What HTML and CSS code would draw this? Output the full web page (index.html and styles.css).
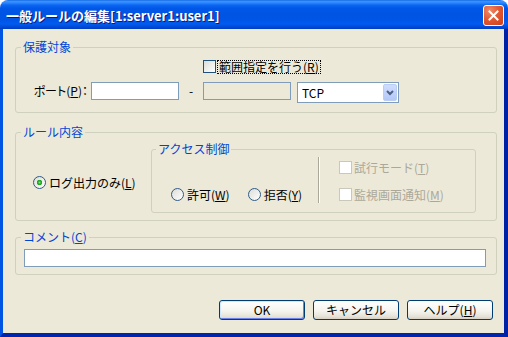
FILE: index.html
```html
<!DOCTYPE html>
<html lang="ja">
<head>
    <meta charset="UTF-8">
    <title>一般ルールの編集</title>
    <link rel="stylesheet" href="styles.css">
</head>
<body>
    <div class="window">
        <div class="titlebar">
            <span class="title">一般ルールの編集[1:server1:user1]</span>
            <span class="close-btn">
                <svg width="11" height="11" viewBox="0 0 11 11"><path d="M1.5 1.5 L9.5 9.5 M9.5 1.5 L1.5 9.5" stroke="#fff" stroke-width="2" stroke-linecap="square"/></svg>
            </span>
        </div>

        <div class="client">
            <fieldset class="group group-target">
                <legend>保護対象</legend>
                <div class="target-grid">
                    <label class="check range"><span class="checkbox"></span><span class="focus">範囲指定を行う(<u>R</u>)</span></label>
                    <span class="port-label">ポート(<u>P</u>)：</span>
                    <input class="textbox" type="text">
                    <span class="dash">-</span>
                    <input class="textbox" type="text" disabled>
                    <span class="combo">
                        <span class="combo-text">TCP</span>
                        <span class="combo-btn">
                            <svg width="8" height="6" viewBox="0 0 8 6"><path d="M1 1 L4 4 L7 1" fill="none" stroke="#4d6185" stroke-width="2"/></svg>
                        </span>
                    </span>
                </div>
            </fieldset>

            <fieldset class="group group-rule">
                <legend>ルール内容</legend>
                <div class="rule-row">
                    <div class="log-col">
                        <label class="radio-item"><span class="radio checked"></span>ログ出力のみ(<u>L</u>)</label>
                    </div>
                    <fieldset class="group group-access">
                        <legend>アクセス制御</legend>
                        <div class="access-row">
                            <div class="radios">
                                <label class="radio-item"><span class="radio"></span>許可(<u>W</u>)</label>
                                <label class="radio-item"><span class="radio"></span>拒否(<u>Y</u>)</label>
                            </div>
                            <span class="separator"></span>
                            <div class="options">
                                <label class="check disabled"><span class="checkbox"></span>試行モード(<u>T</u>)</label>
                                <label class="check disabled"><span class="checkbox"></span>監視画面通知(<u>M</u>)</label>
                            </div>
                        </div>
                    </fieldset>
                </div>
            </fieldset>

            <fieldset class="group group-comment">
                <legend>コメント(<u>C</u>)</legend>
                <input class="textbox comment-box" type="text">
            </fieldset>

            <div class="buttons">
                <button class="btn default">OK</button>
                <button class="btn">キャンセル</button>
                <button class="btn">ヘルプ(<u>H</u>)</button>
            </div>
        </div>
    </div>
</body>
</html>
```

FILE: styles.css
```css
* { box-sizing: border-box; }
body { margin: 0; background: #fff; font-family: "Noto Sans CJK JP", "Liberation Sans", sans-serif; font-size: 12px; color: #000; }
u { text-decoration: underline; text-underline-offset: 1px; }

.window { width: 508px; height: 337px; display: flex; flex-direction: column; }

/* title bar */
.titlebar { flex: none; height: 29px; display: flex; align-items: flex-start; border-radius: 8px 8px 0 0;
    background: linear-gradient(to bottom, #0a5bd8 0, #3d95ff 1px, #2a85ff 3px, #0c67f0 5px, #0058e8 8px, #0054e3 14px, #0055e6 20px, #005cef 24px, #0049d6 27px, #003dc0 29px); }
.title { margin: 7px 0 0 6px; font-size: 13px; font-weight: bold; line-height: 17px; color: #fff; text-shadow: 1px 1px 0 #0a1a8a; }
.close-btn { margin: 5px 4px 0 auto; width: 21px; height: 21px; border: 1px solid #fff; border-radius: 3px; display: flex; align-items: center; justify-content: center;
    background: radial-gradient(circle at 30% 25%, #f08a6a 0, #e25a33 45%, #c9401c 100%); }

/* client area */
.client { flex: 1; background: #ece9d8; border-left: 3px solid #0054e3; border-right: 4px solid #0021a3; border-bottom: 4px solid #0024ab; padding-top: 11px; }

.group { margin: 0; padding: 0; border: 1px solid #d0d0bf; border-radius: 3px; min-width: 0; }
.group legend { margin-left: 5px; padding: 0 2px; line-height: 14px; color: #0046d5; }
.group-target, .group-rule, .group-comment { width: 482px; margin-left: 12px; }

/* 保護対象 */
.group-target { padding-bottom: 10px; }
.target-grid { display: grid; grid-template-columns: 59px 88px 24px 88px 108px; grid-template-rows: 13px 20px; row-gap: 9px; margin: 6px 0 0 16px; align-items: start; }
.range { grid-column: 4 / 6; }
.port-label { justify-self: end; padding-right: 3px; white-space: nowrap; line-height: 18px; font-feature-settings: "palt"; }
.dash { text-align: center; line-height: 18px; }
.textbox { width: 88px; height: 18px; border: 1px solid #7f9db9; background: #fff; padding: 0 3px; font: inherit; outline: none; }
.textbox:disabled { background: #ece9d8; }
.combo { margin-left: 6px; width: 102px; height: 21px; border: 1px solid #7f9db9; background: #fff; display: flex; align-items: center; padding: 1px; }
.combo-text { padding-left: 3px; line-height: 17px; }
.combo-btn { margin-left: auto; width: 14px; height: 17px; border: 1px solid #b9cdf6; border-radius: 2px; background: linear-gradient(#cfdcfd, #b4c8f7); display: flex; align-items: center; justify-content: center; }

/* checkboxes and radios */
.check, .radio-item { display: flex; align-items: center; line-height: 13px; white-space: nowrap; }
.checkbox { flex: none; width: 13px; height: 13px; border: 1px solid #1c5180; background: linear-gradient(135deg, #dcdcd7, #fff); margin-right: 2px; }
.focus { padding: 0 1px; outline: 1px dotted #000; line-height: 12px; }
.check.disabled { color: #aca899; }
.check.disabled .checkbox { border-color: #cac8bb; background: #fff; }
.radio { flex: none; width: 13px; height: 13px; border: 1px solid #2f5b89; border-radius: 50%; margin-right: 3px; background: linear-gradient(135deg, #dcdcd7, #fff); }
.radio.checked { background: radial-gradient(circle, #7ee07e 0, #2fae2f 1.5px, #21a121 2.5px, transparent 3px), linear-gradient(135deg, #dcdcd7, #fff); }

/* ルール内容 */
.group-rule { margin-top: 12px; padding-bottom: 7px; }
.rule-row { display: flex; margin-top: 3px; }
.log-col { width: 135px; padding: 34px 0 0 17px; }
.group-access { width: 325px; }
.group-access legend { margin-left: 4px; }
.access-row { display: flex; height: 56px; }
.radios { width: 166px; display: flex; gap: 18px; padding: 20px 0 0 19px; }
.separator { width: 2px; height: 46px; margin-top: 1px; border-left: 1px solid #aca899; border-right: 1px solid #fff; }
.options { margin-left: 19px; padding-top: 5px; display: flex; flex-direction: column; gap: 14px; }

/* コメント */
.group-comment { margin-top: 9px; padding-bottom: 7px; }
.comment-box { display: block; width: 462px; margin: 5px 0 0 8px; }

/* buttons */
.buttons { display: flex; justify-content: flex-end; gap: 8px; margin: 25px 11px 0 0; }
.btn { width: 86px; height: 20px; padding: 0; border: 1px solid #003c74; border-radius: 3px; font: inherit; line-height: 16px; color: #000;
    background: linear-gradient(#fff, #f5f4ee 55%, #e6e3d8 85%, #d6d0c5); }
.btn.default { box-shadow: inset 1px 1px 0 #cee7ff, inset -1px -1px 0 #6982ee; }
```
